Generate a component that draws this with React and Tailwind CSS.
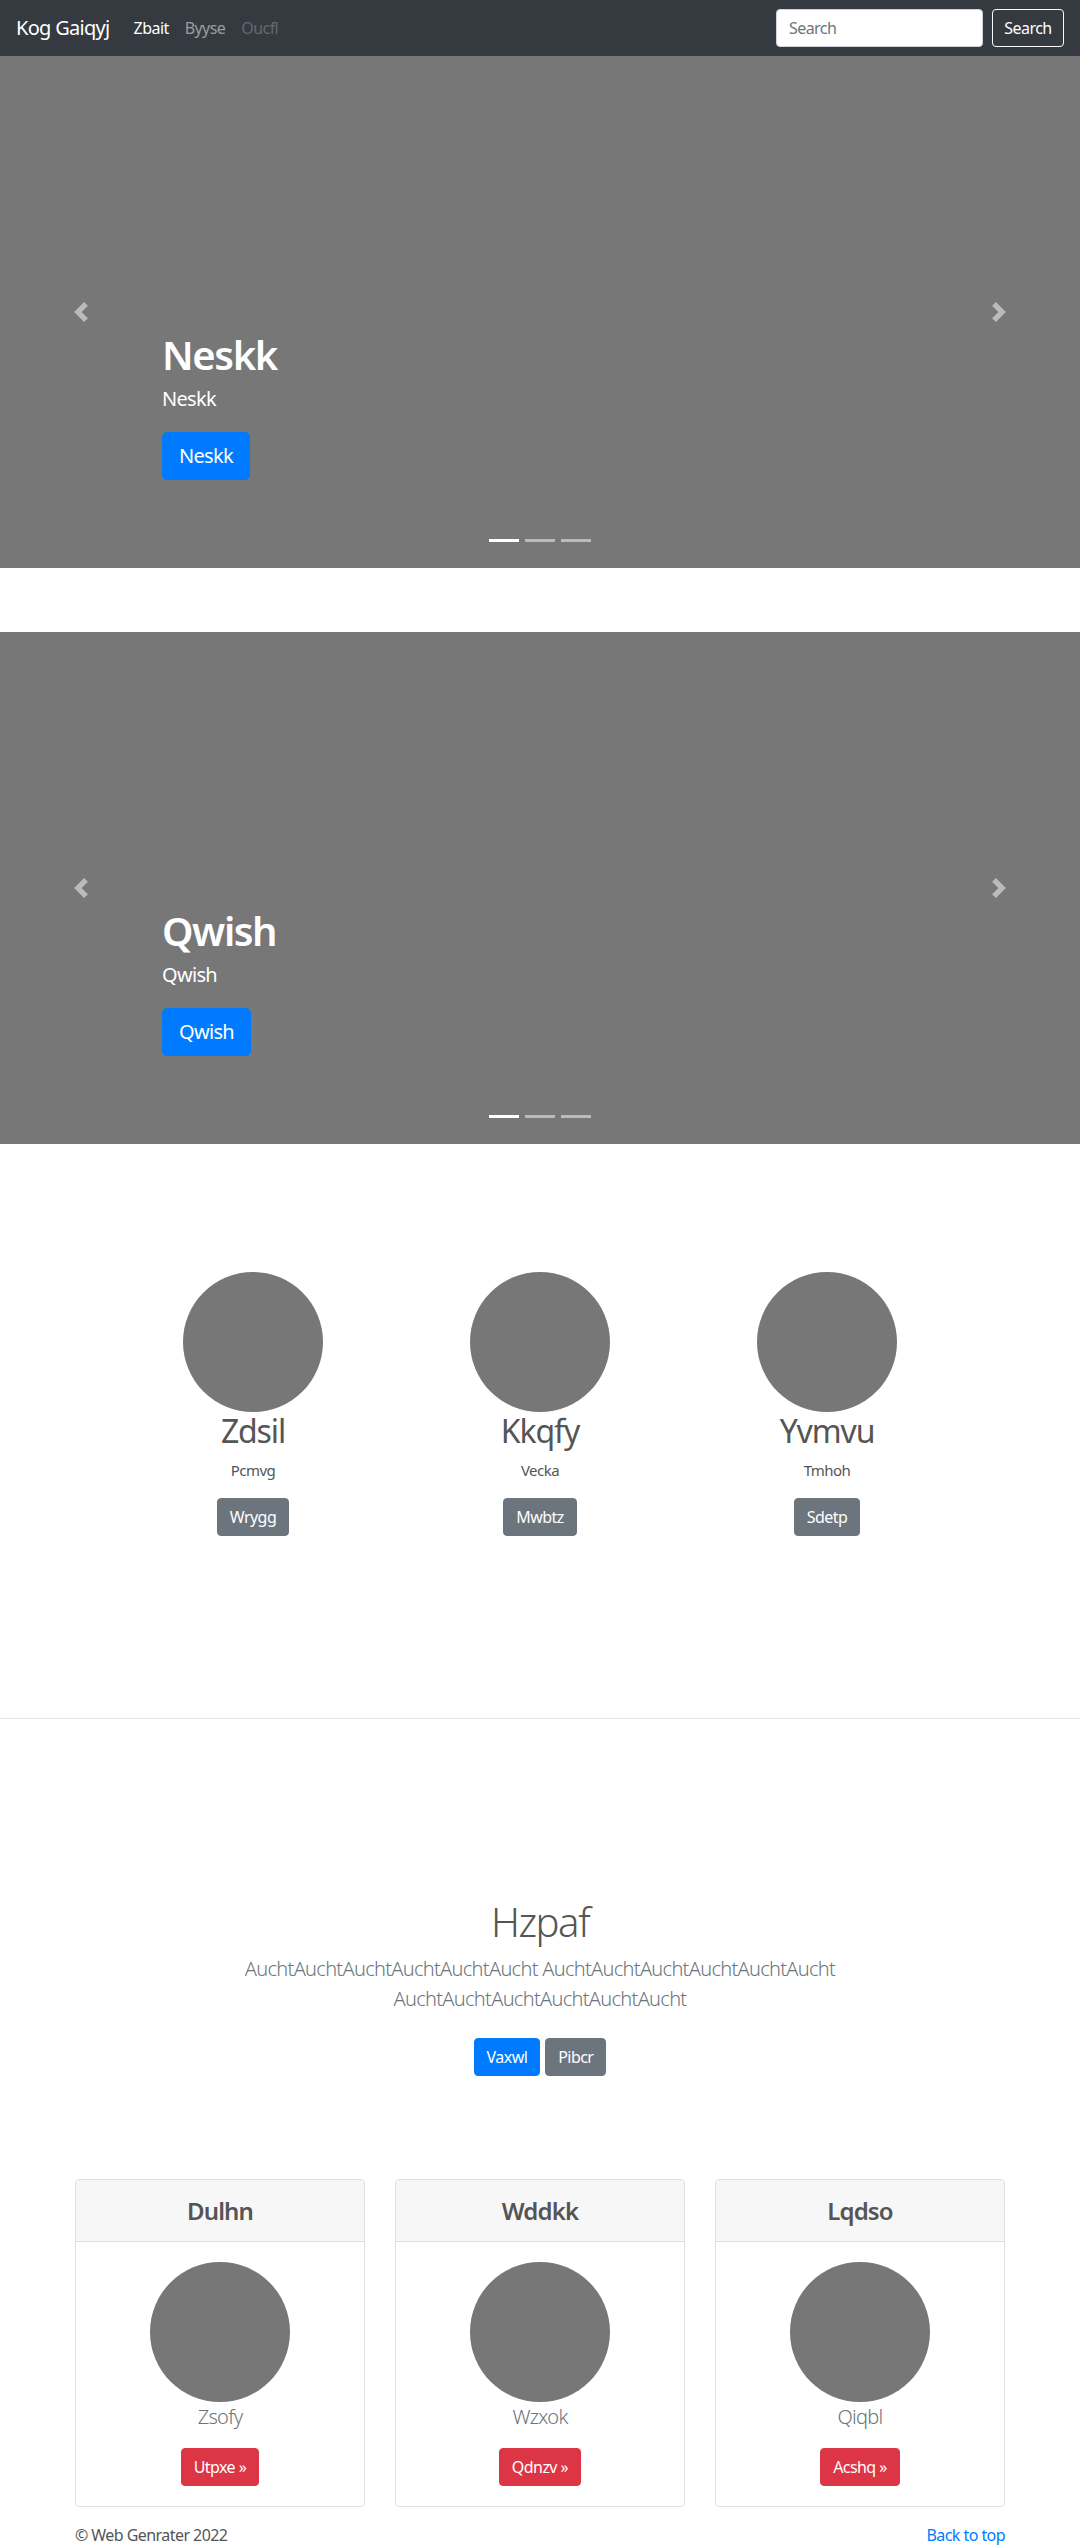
import React from "react";

const T = "tracking-[-0.035em]";

function PrevIcon() {
  return (
    <svg width="20" height="20" viewBox="0 0 8 8" fill="#fff">
      <path d="M5.25 0l-4 4 4 4 1.5-1.5L4.25 4l2.5-2.5L5.25 0z" />
    </svg>
  );
}
function NextIcon() {
  return (
    <svg width="20" height="20" viewBox="0 0 8 8" fill="#fff">
      <path d="M2.75 0l-1.5 1.5L3.75 4l-2.5 2.5L2.75 8l4-4-4-4z" />
    </svg>
  );
}

function Carousel({ title }) {
  return (
    <div className="relative h-[512px] bg-[#777777] flex items-end">
      <div className="absolute left-0 top-0 h-full w-[162px] flex items-center justify-center opacity-50">
        <PrevIcon />
      </div>
      <div className="absolute right-0 top-0 h-full w-[162px] flex items-center justify-center opacity-50">
        <NextIcon />
      </div>
      <div className="pl-[162px] pb-[88px] text-white">
        <h1 className={`text-[40px] leading-[48px] font-semibold mb-[5px] ${T}`}>{title}</h1>
        <p className={`text-[20px] leading-[30px] mb-[18px] ${T}`}>{title}</p>
        <a className={`inline-block bg-[#007bff] text-white text-[20px] leading-[30px] px-4 py-2 border border-[#007bff] rounded-[5px] ${T}`}>
          {title}
        </a>
      </div>
      <div className="absolute left-0 right-0 bottom-[26px] flex justify-center gap-[6px]">
        <span className="w-[30px] h-[3px] bg-white" />
        <span className="w-[30px] h-[3px] bg-white opacity-50" />
        <span className="w-[30px] h-[3px] bg-white opacity-50" />
      </div>
    </div>
  );
}

function Marketing({ title, sub, btn }) {
  return (
    <div className="flex flex-col items-center text-center">
      <div className="w-[140px] h-[140px] rounded-full bg-[#777777]" />
      <h2 className={`text-[32px] leading-[38px] font-normal text-[#555] mb-2 ${T}`}>{title}</h2>
      <p className={`text-[15px] leading-[24px] text-[#555] mb-4 ${T}`}>{sub}</p>
      <a className={`inline-block bg-[#6c757d] text-white text-[16px] leading-[24px] px-3 py-[6px] border border-[#6c757d] rounded ${T}`}>
        {btn}
      </a>
    </div>
  );
}

function Card({ title, name, btn }) {
  return (
    <div className="border border-[#dfdfdf] rounded bg-white overflow-hidden">
      <div className="h-[62px] bg-[#f7f7f7] border-b border-[#dfdfdf] flex items-center justify-center">
        <h4 className={`text-[24px] font-semibold text-[#555] ${T}`}>{title}</h4>
      </div>
      <div className="p-5 flex flex-col items-center">
        <div className="w-[140px] h-[140px] rounded-full bg-[#777777]" />
        <p className={`text-[20px] leading-[30px] font-light text-[#6c757d] mb-4 ${T}`}>{name}</p>
        <a className={`inline-block bg-[#dc3545] text-white text-[16px] leading-[24px] px-3 py-[6px] border border-[#dc3545] rounded ${T}`}>
          {btn} »
        </a>
      </div>
    </div>
  );
}

export default function App() {
  const w = "AuchtAuchtAuchtAuchtAuchtAucht";
  return (
    <div className="font-['Noto_Sans','Open_Sans',sans-serif] text-[#555] bg-white">
      <nav className="h-[56px] bg-[#343a40] flex items-center px-4">
        <span className={`text-white text-[20px] mr-4 ${T}`}>Kog Gaiqyj</span>
        <a className={`text-white text-[16px] px-2 ${T}`}>Zbait</a>
        <a className={`text-[rgba(255,255,255,0.5)] text-[16px] px-2 ${T}`}>Byyse</a>
        <a className={`text-[rgba(255,255,255,0.25)] text-[16px] px-2 ${T}`}>Oucfl</a>
        <div className="ml-auto flex items-center">
          <div className={`w-[207px] h-[38px] bg-white rounded border border-[#ced4da] flex items-center px-3 text-[16px] text-[#6c757d] mr-[9px] ${T}`}>
            Search
          </div>
          <button className={`h-[38px] w-[72px] border border-[#f8f9fa] rounded text-white text-[16px] ${T}`}>
            Search
          </button>
        </div>
      </nav>

      <Carousel title="Neskk" />
      <div className="h-[64px]" />
      <Carousel title="Qwish" />

      <section className="pt-[128px] pb-[182px]">
        <div className="w-[861px] mx-auto grid grid-cols-3">
          <Marketing title="Zdsil" sub="Pcmvg" btn="Wrygg" />
          <Marketing title="Kkqfy" sub="Vecka" btn="Mwbtz" />
          <Marketing title="Yvmvu" sub="Tmhoh" btn="Sdetp" />
        </div>
      </section>

      <hr className="border-0 border-t border-[#e5e5e5]" />

      <section className="pt-[179px] pb-[103px] text-center">
        <h1 className={`text-[40px] leading-[48px] font-light text-[#555] mb-2 ${T}`}>Hzpaf</h1>
        <p className={`text-[20px] leading-[30px] font-light text-[#6c757d] ${T}`}>
          {w} {w}
          <br />
          {w}
        </p>
        <div className="pt-6 flex justify-center gap-[5px]">
          <a className={`inline-block bg-[#007bff] text-white text-[16px] leading-[24px] px-3 py-[6px] border border-[#007bff] rounded ${T}`}>
            Vaxwl
          </a>
          <a className={`inline-block bg-[#6c757d] text-white text-[16px] leading-[24px] px-3 py-[6px] border border-[#6c757d] rounded ${T}`}>
            Pibcr
          </a>
        </div>
      </section>

      <div className="w-[930px] mx-auto grid grid-cols-3 gap-[30px]">
        <Card title="Dulhn" name="Zsofy" btn="Utpxe" />
        <Card title="Wddkk" name="Wzxok" btn="Qdnzv" />
        <Card title="Lqdso" name="Qiqbl" btn="Acshq" />
      </div>

      <footer className={`w-[930px] mx-auto pt-[16px] flex justify-between text-[16px] leading-[24px] text-[#555] ${T}`}>
        <span>© Web Genrater 2022</span>
        <a className="text-[#007bff]">Back to top</a>
      </footer>
    </div>
  );
}
